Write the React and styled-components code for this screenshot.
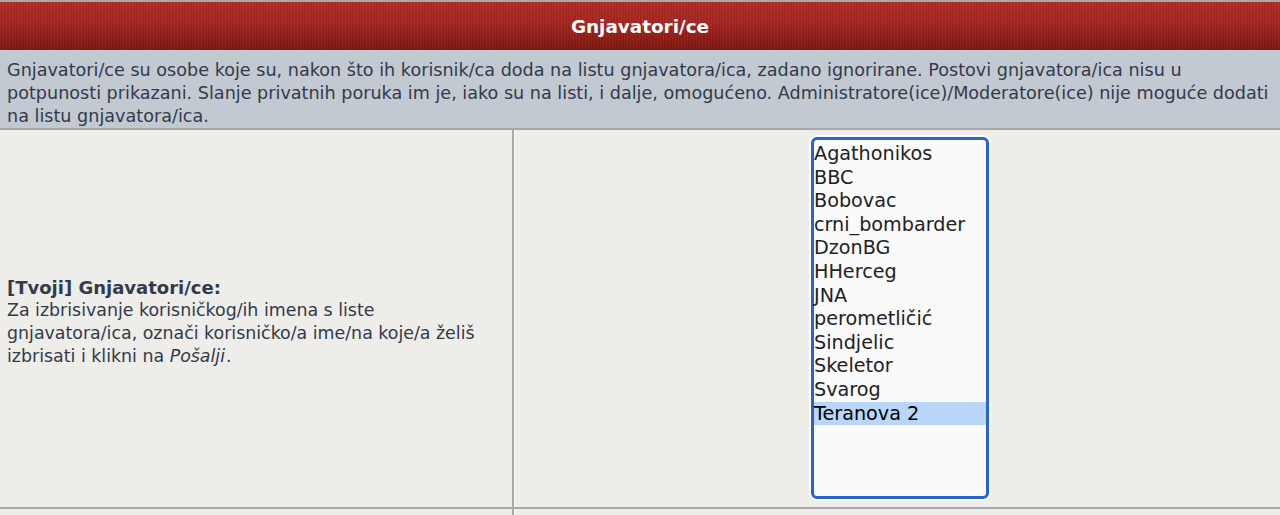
import React from 'react';
import styled, { createGlobalStyle } from 'styled-components';

const GlobalStyle = createGlobalStyle`
  body {
    margin: 0;
    background: #eeede9;
    font-family: "DejaVu Sans", Verdana, sans-serif;
    color: #323a4b;
  }
`;

const Table = styled.div`
  width: 1280px;
  display: flex;
  flex-direction: column;
`;

const Header = styled.div`
  height: 48px;
  border-top: 2px solid #a9a9a9;
  background:
    repeating-linear-gradient(90deg, rgba(255,255,255,0.04) 0 1px, rgba(0,0,0,0.03) 1px 3px),
    linear-gradient(180deg, #b02c26 0%, #a52520 45%, #8c1c16 80%, #7d1711 100%);
  display: flex;
  align-items: center;
  justify-content: center;
  color: #fff;
  font-weight: bold;
  font-size: 18.4px;
`;

const Intro = styled.div`
  background: #c3c9d1;
  border-bottom: 2px solid #a7a7a7;
  padding: 9px 7px 0 7px;
  font-size: 17.6px;
  line-height: 23px;
  height: 69px;
`;

const Row = styled.div`
  display: grid;
  grid-template-columns: 514px 1fr;
  border-bottom: 2px solid #a9a9a9;
  height: 377px;
`;

const Cell = styled.div`
  display: flex;
  align-items: center;
  justify-content: ${p => (p.$center ? 'center' : 'flex-start')};
  border-right: ${p => (p.$divider ? '2px solid #a9a9a9' : 'none')};
  box-shadow: ${p => (p.$divider ? '1px 0 0 #f8f8f6' : 'none')};
  padding: ${p => (p.$center ? '7px 0 0 6px' : '0 7px')};
`;

const Label = styled.div`
  font-size: 17.4px;
  line-height: 23px;
  margin-top: 8px;
`;

const Title = styled.div`
  font-weight: bold;
  font-size: 18px;
  line-height: 22px;
`;

const Emphasis = styled.em`
  font-style: italic;
  padding-right: 1px;
`;

const List = styled.div`
  width: 172px;
  height: 354px;
  align-self: flex-start;
  border: 3px solid #2a63c9;
  border-radius: 6px;
  background: #fafafa;
  padding-top: 2px;
  box-sizing: content-box;
  box-shadow: 0 0 0 2px #fbfbfb;
`;

const Option = styled.div`
  font-size: 19.2px;
  line-height: 23.6px;
  padding-left: 0;
  white-space: nowrap;
  background: ${p => (p.$selected ? '#b9d6f8' : 'transparent')};
  color: ${p => (p.$selected ? '#000' : '#222')};
`;

const NextRow = styled.div`
  display: grid;
  grid-template-columns: 514px 1fr;
  height: 8px;
`;

const names = [
  'Agathonikos',
  'BBC',
  'Bobovac',
  'crni_bombarder',
  'DzonBG',
  'HHerceg',
  'JNA',
  'perometličić',
  'Sindjelic',
  'Skeletor',
  'Svarog',
  'Teranova 2',
];

const App = () => (
  <>
    <GlobalStyle />
    <Table>
      <Header>Gnjavatori/ce</Header>
      <Intro>
        Gnjavatori/ce su osobe koje su, nakon što ih korisnik/ca doda na listu
        gnjavatora/ica, zadano ignorirane. Postovi gnjavatora/ica nisu u
        potpunosti prikazani. Slanje privatnih poruka im je, iako su na listi, i
        dalje, omogućeno. Administratore(ice)/Moderatore(ice) nije moguće dodati
        na listu gnjavatora/ica.
      </Intro>
      <Row>
        <Cell $divider>
          <Label>
            <Title>[Tvoji] Gnjavatori/ce:</Title>
            Za izbrisivanje korisničkog/ih imena s liste gnjavatora/ica, označi
            korisničko/a ime/na koje/a želiš izbrisati i klikni na{' '}
            <Emphasis>Pošalji</Emphasis>.
          </Label>
        </Cell>
        <Cell $center>
          <List>
            {names.map((n, i) => (
              <Option key={n} $selected={i === names.length - 1}>
                {n}
              </Option>
            ))}
          </List>
        </Cell>
      </Row>
      <NextRow>
        <Cell $divider />
        <Cell />
      </NextRow>
    </Table>
  </>
);

export default App;
